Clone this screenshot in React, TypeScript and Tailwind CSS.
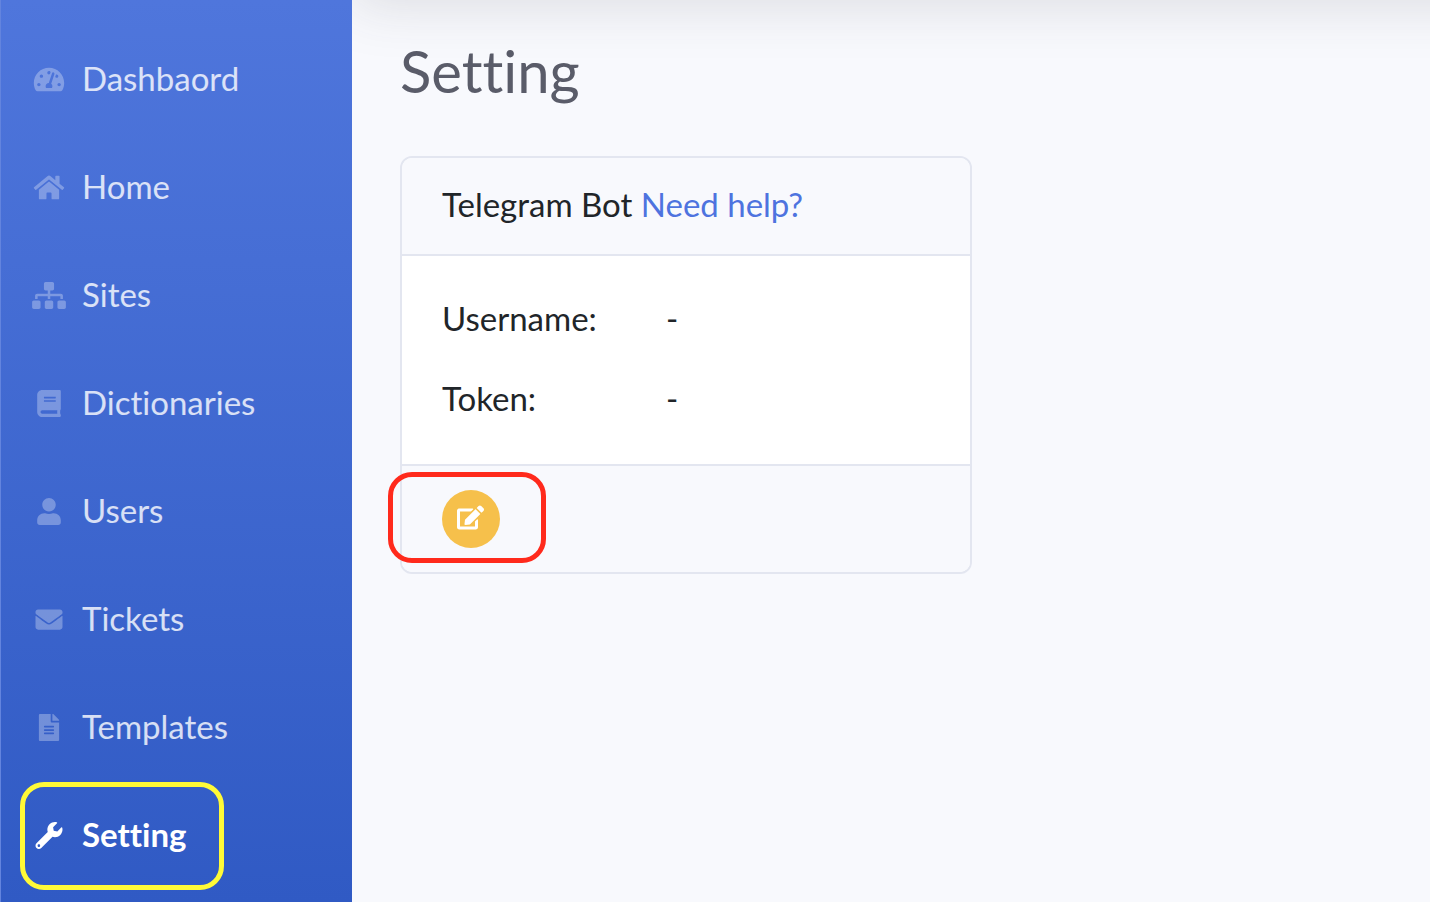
import { FaTachometerAlt, FaHome, FaSitemap, FaBook, FaUser, FaEnvelope, FaFileAlt, FaWrench, FaEdit } from 'react-icons/fa';

const items = [
  { label: 'Dashbaord', icon: FaTachometerAlt },
  { label: 'Home', icon: FaHome },
  { label: 'Sites', icon: FaSitemap },
  { label: 'Dictionaries', icon: FaBook },
  { label: 'Users', icon: FaUser },
  { label: 'Tickets', icon: FaEnvelope },
  { label: 'Templates', icon: FaFileAlt },
];

const rows = [
  { label: 'Username:', value: '-' },
  { label: 'Token:', value: '-' },
];

export default function App() {
  return (
    <div className="flex min-h-screen bg-[#f8f9fd] font-[Lato,sans-serif] text-[33px] leading-12 text-[#212529] [font-variant-ligatures:none]">
      <nav className="w-88 shrink-0 border-l border-[#6384de] bg-linear-to-b from-[#4f76dc] to-[#305ac4] pt-[25px]">
        <ul>
          {items.map(({ label, icon: Icon }) => (
            <li key={label}>
              <a href="#" className="flex h-27 items-center gap-4 pr-8 pl-[31px] text-white/80">
                <Icon className="h-[27px] w-[34px] text-white/30" aria-hidden="true" />
                <span className="pb-0.5">{label}</span>
              </a>
            </li>
          ))}
          <li className="relative">
            <a href="#" aria-current="page" className="flex h-27 items-center gap-4 pr-8 pl-[31px] font-bold text-white">
              <FaWrench className="h-[27px] w-[34px]" aria-hidden="true" />
              <span className="pb-0.5">Setting</span>
            </a>
            <span className="pointer-events-none absolute top-px left-[19px] h-27 w-51 rounded-3xl border-5 border-[#fffa37]" />
          </li>
        </ul>
      </nav>
      <main className="relative min-w-0 flex-1 overflow-hidden px-12 pt-9">
        <div className="pointer-events-none absolute -top-35 -right-20 left-0 h-35 shadow-[0_5px_56px_rgba(58,59,69,0.15)]" />
        <h1 className="mb-[50px] text-[58px] leading-[70px] text-[#5a5c69]">Setting</h1>
        <section className="max-w-[572px] rounded-xl border-2 border-[#e3e6f0] bg-white">
          <header className="rounded-t-[10px] border-b-2 border-[#e3e6f0] bg-[#f8f9fd] px-10 pt-[22px] pb-[26px]">
            Telegram Bot <a href="#" className="text-[#4e73df]">Need help?</a>
          </header>
          <dl className="flex flex-col gap-8 px-10 pt-[38px] pb-[42px]">
            {rows.map((r) => (
              <div key={r.label} className="flex">
                <dt className="w-56">{r.label}</dt>
                <dd>{r.value}</dd>
              </div>
            ))}
          </dl>
          <footer className="relative rounded-b-[10px] border-t-2 border-[#e3e6f0] bg-[#f8f9fd] px-10 py-6">
            <button type="button" aria-label="Edit" className="flex size-[58px] items-center justify-center rounded-full bg-[#f6c04b] pr-0.5 pb-1 text-white">
              <FaEdit className="size-[27px]" aria-hidden="true" />
            </button>
            <span className="pointer-events-none absolute top-1.5 -left-3.5 h-[91px] w-[158px] rounded-3xl border-5 border-[#ff2a1c]" />
          </footer>
        </section>
      </main>
    </div>
  );
}
